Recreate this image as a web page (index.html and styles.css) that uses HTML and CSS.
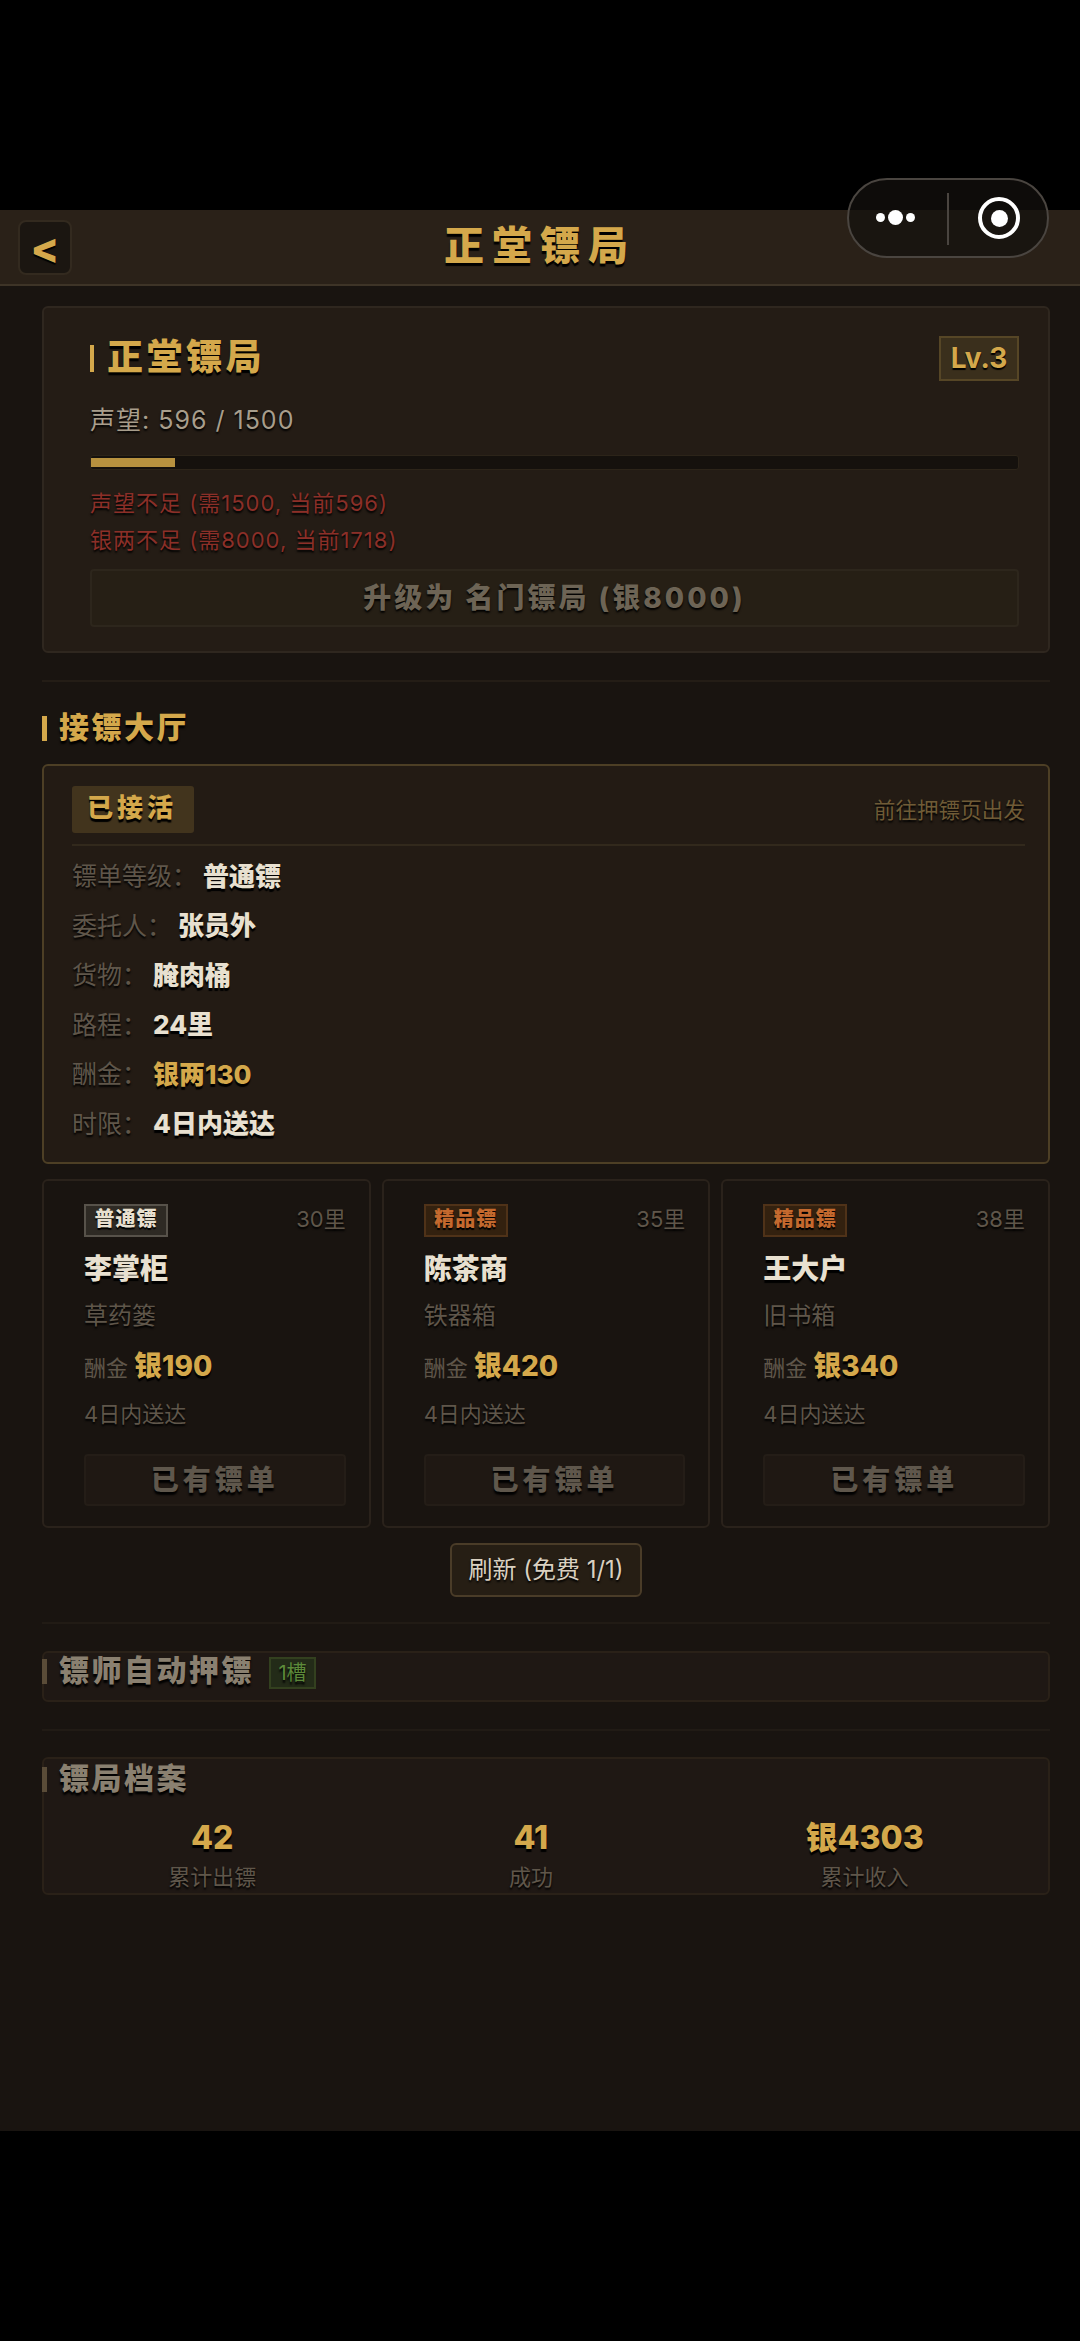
FILE: index.html
```html
<!DOCTYPE html>
<html lang="zh-CN">
<head>
<meta charset="utf-8">
<title>正堂镖局</title>
<link rel="stylesheet" href="styles.css">
</head>
<body>
<div class="app">
  <header class="topbar">
    <div class="topbar-side"><button class="back">&lt;</button></div>
    <h1 class="topbar-title">正堂镖局</h1>
    <div class="topbar-side"></div>
  </header>
  <main class="main">
    <section class="card hall-card">
      <div class="hall-head">
        <div class="hall-name"><i class="bar bar-tall"></i><span>正堂镖局</span></div>
        <div class="lv">Lv.3</div>
      </div>
      <div class="rep">声望: 596 / 1500</div>
      <div class="progress"><div class="progress-fill" style="width:9.1%"></div></div>
      <div class="warn warn-first">声望不足 (需1500, 当前596)</div>
      <div class="warn">银两不足 (需8000, 当前1718)</div>
      <button class="upgrade">升级为 名门镖局 (银8000)</button>
    </section>

    <hr class="rule">

    <h2 class="sec-title"><i class="bar"></i><span>接镖大厅</span></h2>

    <section class="card active-card">
      <div class="active-head">
        <span class="active-tag">已接活</span>
        <span class="active-hint">前往押镖页出发</span>
      </div>
      <div class="rows">
        <div class="row"><span class="row-label">镖单等级：</span><span class="row-value">普通镖</span></div>
        <div class="row"><span class="row-label">委托人：</span><span class="row-value">张员外</span></div>
        <div class="row"><span class="row-label">货物：</span><span class="row-value">腌肉桶</span></div>
        <div class="row"><span class="row-label">路程：</span><span class="row-value">24里</span></div>
        <div class="row"><span class="row-label">酬金：</span><span class="row-value row-gold">银两130</span></div>
        <div class="row"><span class="row-label">时限：</span><span class="row-value">4日内送达</span></div>
      </div>
    </section>

    <div class="orders">
      <article class="order">
        <div class="order-top"><span class="grade grade-normal">普通镖</span><span class="dist">30里</span></div>
        <div class="order-name">李掌柜</div>
        <div class="order-goods">草药篓</div>
        <div class="order-pay"><span class="pay-label">酬金</span><span class="pay-value">银190</span></div>
        <div class="order-time">4日内送达</div>
        <button class="order-btn">已有镖单</button>
      </article>
      <article class="order">
        <div class="order-top"><span class="grade grade-fine">精品镖</span><span class="dist">35里</span></div>
        <div class="order-name">陈茶商</div>
        <div class="order-goods">铁器箱</div>
        <div class="order-pay"><span class="pay-label">酬金</span><span class="pay-value">银420</span></div>
        <div class="order-time">4日内送达</div>
        <button class="order-btn">已有镖单</button>
      </article>
      <article class="order">
        <div class="order-top"><span class="grade grade-fine">精品镖</span><span class="dist">38里</span></div>
        <div class="order-name">王大户</div>
        <div class="order-goods">旧书箱</div>
        <div class="order-pay"><span class="pay-label">酬金</span><span class="pay-value">银340</span></div>
        <div class="order-time">4日内送达</div>
        <button class="order-btn">已有镖单</button>
      </article>
    </div>

    <div class="refresh-wrap"><button class="refresh">刷新 (免费 1/1)</button></div>

    <hr class="rule rule-low">

    <section class="fold fold-auto">
      <h2 class="sec-title sec-dim"><i class="bar"></i><span>镖师自动押镖</span><em class="slot">1槽</em></h2>
    </section>

    <hr class="rule rule-low">

    <section class="fold fold-stats">
      <h2 class="sec-title sec-dim"><i class="bar"></i><span>镖局档案</span></h2>
      <div class="stats">
        <div class="stat"><div class="stat-value">42</div><div class="stat-label">累计出镖</div></div>
        <div class="stat"><div class="stat-value">41</div><div class="stat-label">成功</div></div>
        <div class="stat"><div class="stat-value">银4303</div><div class="stat-label">累计收入</div></div>
      </div>
    </section>
  </main>

  <div class="capsule">
    <div class="capsule-dots"><i class="dot"></i><i class="dot dot-big"></i><i class="dot"></i></div>
    <div class="capsule-line"></div>
    <div class="capsule-ring"><i class="ring-core"></i></div>
  </div>
</div>
</body>
</html>
```

FILE: styles.css
```css
* { box-sizing: border-box; }
html, body { margin: 0; padding: 0; background: #000; }
body {
  width: 1080px;
  height: 2341px;
  padding-top: 210px;
  overflow: hidden;
  font-family: "Inter", "Noto Sans CJK SC", sans-serif;
}
button { font-family: inherit; padding: 0; margin: 0; }
h1, h2 { margin: 0; font-weight: 900; }
em, i { font-style: normal; }

.app {
  position: relative;
  height: 1921px;
  background: #191410;
}

/* top bar */
.topbar {
  height: 76px;
  padding: 10px 18px 0;
  display: grid;
  grid-template-columns: 1fr auto 1fr;
  align-items: start;
  background: #2a2118;
  border-bottom: 2px solid #3e3427;
}
.back {
  display: block;
  width: 54px;
  height: 55px;
  background: #1b1611;
  border: 2px solid #332a1f;
  border-radius: 8px;
  color: #d4a84b;
  font-size: 42px;
  line-height: 44px;
  font-weight: 800;
  text-shadow: 0 2px 1px #000;
}
.topbar-title {
  font-size: 40px;
  line-height: 52px;
  letter-spacing: 8px;
  color: #d4a84b;
  text-shadow: 0 3px 1px #000;
}

/* capsule */
.capsule {
  position: absolute;
  left: 847px;
  top: -32px;
  width: 202px;
  height: 80px;
  border-radius: 40px;
  border: 2px solid #4a4540;
  background: rgba(20, 17, 14, .72);
}
.capsule-dots {
  position: absolute;
  left: 27px;
  top: 30px;
  display: flex;
  align-items: center;
  gap: 3px;
}
.dot { width: 9px; height: 9px; border-radius: 50%; background: #fff; }
.dot-big { width: 15px; height: 15px; }
.capsule-line {
  position: absolute;
  left: 98px;
  top: 13px;
  width: 2px;
  height: 52px;
  background: #4a4540;
}
.capsule-ring {
  position: absolute;
  left: 129px;
  top: 17px;
  width: 42px;
  height: 42px;
  border-radius: 50%;
  border: 4px solid #fff;
  display: flex;
  align-items: center;
  justify-content: center;
}
.ring-core { width: 17px; height: 17px; border-radius: 50%; background: #fff; }

/* main column */
.main { padding: 20px 30px 0 42px; }
.rule {
  height: 2px;
  margin: 27px 0 0;
  border: 0;
  background: #241d16;
}
.rule-low { margin-top: 25px; background: #211b15; }
.fold + .rule-low { margin-top: 27px; }

.card {
  background: #241c15;
  border-radius: 6px;
}
.bar {
  flex: none;
  display: block;
  width: 5px;
  height: 25px;
  background: #d4a84b;
}

/* hall card */
.hall-card {
  height: 347px;
  padding: 28px 29px 0 46px;
  border: 2px solid #2f271f;
}
.hall-head { display: flex; justify-content: space-between; align-items: center; height: 45px; }
.hall-name {
  display: flex;
  align-items: center;
  gap: 13px;
  font-size: 36px;
  font-weight: 900;
  letter-spacing: 3.5px;
  color: #d4a84b;
  text-shadow: 0 3px 1px #000;
}
.hall-name span { margin-top: -10px; }
.bar-tall { height: 27px; width: 4px; }
.lv {
  width: 80px;
  height: 45px;
  line-height: 41px;
  text-align: center;
  font-size: 28px;
  font-weight: 700;
  color: #d4a84b;
  background: #3a2f1c;
  border: 2px solid #564626;
  text-shadow: 0 2px 1px #000;
}
.rep {
  margin-top: 21px;
  font-size: 25px;
  line-height: 36px;
  letter-spacing: 1px;
  color: #a89e8c;
  text-shadow: 0 2px 2px #000;
}
.progress {
  height: 15px;
  margin-top: 17px;
  padding: 2px 0;
  border-radius: 3px;
  background: #15110d;
  border: 1px solid #2c2419;
}
.progress-fill { height: 100%; background: #b8923f; }
.warn {
  font-size: 22px;
  line-height: 37px;
  letter-spacing: 1px;
  color: #8c2f28;
  text-shadow: 0 2px 2px #000;
}
.warn-first { margin-top: 15px; }
.upgrade {
  display: block;
  width: 100%;
  height: 58px;
  margin-top: 10px;
  background: #261f15;
  border: 2px solid #2d261c;
  border-radius: 4px;
  color: #6d6455;
  font-size: 28px;
  line-height: 50px;
  font-weight: 800;
  letter-spacing: 3px;
  text-shadow: 0 2px 2px #000;
}

/* section title */
.sec-title {
  display: flex;
  align-items: center;
  gap: 12px;
  height: 36px;
  margin-top: 28px;
  font-size: 30px;
  letter-spacing: 2.5px;
  color: #d4a84b;
  text-shadow: 0 3px 2px #000;
}
.sec-title span { margin-top: -6px; }

/* active job */
.active-card {
  height: 400px;
  margin-top: 18px;
  padding: 20px 23px 0 28px;
  background: #231b14;
  border: 2px solid #4d3f25;
}
.active-head {
  display: flex;
  justify-content: space-between;
  align-items: center;
  height: 60px;
  padding-bottom: 11px;
  border-bottom: 2px solid #32291c;
}
.active-tag {
  width: 122px;
  height: 47px;
  padding-left: 15px;
  line-height: 44px;
  font-size: 26px;
  font-weight: 900;
  letter-spacing: 4px;
  color: #d4a84b;
  background: #42341d;
  border-radius: 3px;
  text-shadow: 0 3px 1px #000;
}
.active-hint {
  margin-top: -2px;
  font-size: 21.6px;
  color: #6f5b36;
  text-shadow: 0 2px 2px #000;
}
.rows { display: grid; row-gap: 13.5px; margin-top: 10px; }
.row { display: flex; height: 36px; align-items: center; }
.row-label { font-size: 25px; color: #5f564a; margin-right: 6px; text-shadow: 0 2px 2px #000; }
.row-value { font-size: 26px; color: #e8e0d0; font-weight: 800; text-shadow: 0 3px 1px #000; }
.row-gold { color: #d4a84b; }

/* orders */
.orders {
  display: grid;
  grid-template-columns: repeat(3, 1fr);
  gap: 11px;
  margin-top: 15px;
}
.order {
  height: 349px;
  padding: 23px 23px 0 40px;
  background: #191410;
  border: 2px solid #2a221b;
  border-radius: 6px;
}
.order-top { display: flex; justify-content: space-between; align-items: center; height: 33px; }
.grade {
  width: 84px;
  height: 33px;
  text-align: center;
  line-height: 26px;
  font-size: 20px;
  font-weight: 800;
  letter-spacing: 1px;
  border: 2px solid;
  text-shadow: 0 2px 1px #000;
}
.grade-normal { color: #e8e0d0; background: #2e2a24; border-color: #57524a; }
.grade-fine { color: #c4692e; background: #33210f; border-color: #4f3218; }
.dist { margin-top: -7px; font-size: 22px; color: #5f564a; text-shadow: 0 2px 2px #000; }
.order-name {
  margin-top: 12px;
  font-size: 28px;
  line-height: 40px;
  font-weight: 800;
  color: #e8e0d0;
  text-shadow: 0 3px 1px #000;
}
.order-goods {
  margin-top: 10px;
  font-size: 24px;
  line-height: 34px;
  color: #5f564a;
  text-shadow: 0 2px 2px #000;
}
.order-pay { display: flex; align-items: center; gap: 6px; height: 40px; margin-top: 13px; }
.pay-label { font-size: 22px; color: #5f564a; }
.pay-value { margin-top: -4px; font-size: 28px; font-weight: 800; color: #d4a84b; text-shadow: 0 3px 1px #000; }
.order-time {
  margin-top: 12px;
  font-size: 22px;
  line-height: 32px;
  color: #5f564a;
  text-shadow: 0 2px 2px #000;
}
.order-btn {
  display: block;
  width: 100%;
  height: 52px;
  margin-top: 24px;
  background: #1f1813;
  border: 2px solid #241d17;
  border-radius: 4px;
  color: #5f574c;
  font-size: 28px;
  line-height: 43px;
  font-weight: 800;
  letter-spacing: 4px;
  text-shadow: 0 3px 2px #000;
}

/* refresh */
.refresh-wrap { display: flex; justify-content: center; margin-top: 15px; }
.refresh {
  width: 192px;
  height: 54px;
  background: #261e14;
  border: 2px solid #4a3c28;
  border-radius: 6px;
  color: #d9d0c0;
  font-size: 24px;
  line-height: 46px;
  text-shadow: 0 2px 2px #000;
}

/* folded sections */
.fold {
  margin-top: 27px;
  background: #1f1814;
  border: 2px solid #2a2118;
  border-radius: 6px;
}
.fold-auto { height: 51px; }
.fold-stats { height: 138px; margin-top: 26px; padding-top: 2px; }
.sec-dim {
  margin: 0 0 0 -2px;
  color: #8a8070;
}
.sec-dim .bar { background: #5a4c38; }
.slot {
  width: 47px;
  height: 32px;
  margin: 3px 0 0 3px;
  text-align: center;
  line-height: 28px;
  font-size: 20px;
  font-weight: 400;
  letter-spacing: 0;
  color: #5d8a3a;
  background: #232b18;
  border: 2px solid #33401f;
}
.stats { display: flex; justify-content: space-around; margin: 21px -2px 0; }
.stat { text-align: center; }
.stat-value {
  font-size: 32px;
  line-height: 40px;
  font-weight: 800;
  color: #d4a84b;
  text-shadow: 0 3px 1px #000;
}
.stat-label {
  margin-top: 4px;
  font-size: 22px;
  line-height: 30px;
  color: #5f564a;
  text-shadow: 0 2px 2px #000;
}
```
